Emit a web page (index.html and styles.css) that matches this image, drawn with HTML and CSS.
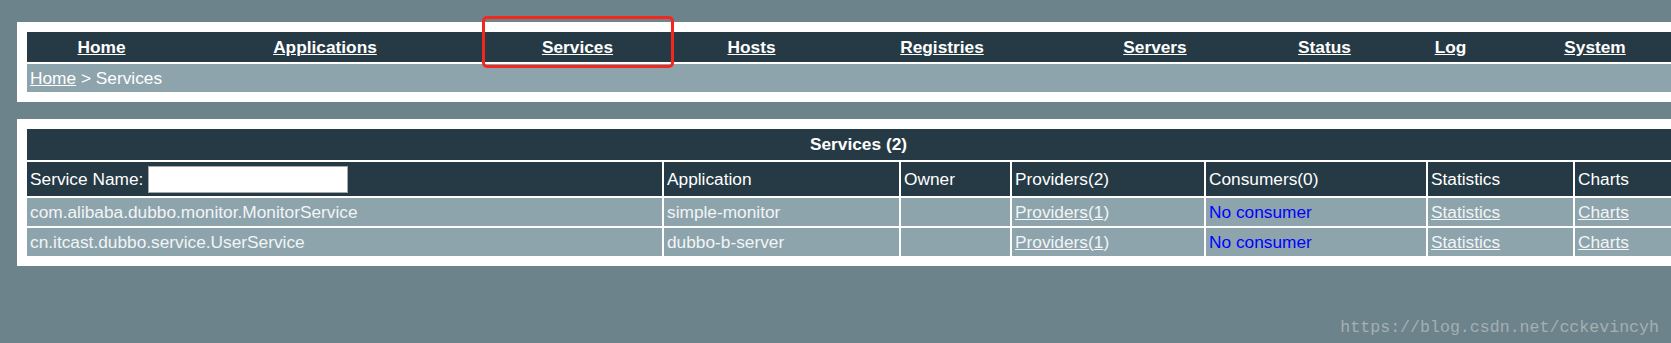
FILE: index.html
```html
<!DOCTYPE html>
<html>
<head>
<meta charset="utf-8">
<title>Services</title>
<link rel="stylesheet" href="styles.css">
</head>
<body>
<div class="page">
  <div class="box top-box">
    <nav class="nav">
      <a class="nav-item" href="#">Home</a>
      <a class="nav-item" href="#">Applications</a>
      <a class="nav-item" href="#">Services</a>
      <a class="nav-item" href="#">Hosts</a>
      <a class="nav-item" href="#">Registries</a>
      <a class="nav-item" href="#">Servers</a>
      <a class="nav-item" href="#">Status</a>
      <a class="nav-item" href="#">Log</a>
      <a class="nav-item" href="#">System</a>
    </nav>
    <div class="crumb"><a href="#">Home</a> &gt; Services</div>
    <div class="highlight"></div>
  </div>

  <div class="box table-box">
    <div class="grid">
      <div class="caption">Services (2)</div>

      <div class="cell head">Service Name:&nbsp;<span class="search"></span></div>
      <div class="cell head">Application</div>
      <div class="cell head">Owner</div>
      <div class="cell head">Providers(2)</div>
      <div class="cell head">Consumers(0)</div>
      <div class="cell head">Statistics</div>
      <div class="cell head">Charts</div>

      <div class="cell row">com.alibaba.dubbo.monitor.MonitorService</div>
      <div class="cell row">simple-monitor</div>
      <div class="cell row"></div>
      <div class="cell row"><a href="#">Providers(</a><a href="#">1</a>)</div>
      <div class="cell row"><span class="none">No consumer</span></div>
      <div class="cell row"><a href="#">Statistics</a></div>
      <div class="cell row"><a href="#">Charts</a></div>

      <div class="cell row">cn.itcast.dubbo.service.UserService</div>
      <div class="cell row">dubbo-b-server</div>
      <div class="cell row"></div>
      <div class="cell row"><a href="#">Providers(</a><a href="#">1</a>)</div>
      <div class="cell row"><span class="none">No consumer</span></div>
      <div class="cell row"><a href="#">Statistics</a></div>
      <div class="cell row"><a href="#">Charts</a></div>
    </div>
  </div>
</div>
<div class="watermark">https://blog.csdn.net/cckevincyh</div>
</body>
</html>
```

FILE: styles.css
```css
html {
  overflow: hidden;
}
body {
  margin: 0;
  background: #6d838b;
  font-family: "Liberation Sans", Arial, sans-serif;
  font-size: 17.3px;
  color: #ffffff;
  width: 1671px;
  height: 343px;
  overflow: hidden;
  position: relative;
}
.page {
  padding: 22px 0 0 17px;
  width: 1683px;
  display: flex;
  flex-direction: column;
  gap: 17px;
}
.box {
  background: #ffffff;
  padding: 10px;
  box-sizing: border-box;
  width: 1683px;
}
.top-box {
  position: relative;
  display: flex;
  flex-direction: column;
  gap: 2px;
}
.nav {
  display: grid;
  grid-template-columns: 149px 298px 207px 141px 240px 186px 153px 99px 1fr;
  height: 30px;
  background: #263a46;
}
.nav-item {
  display: flex;
  align-items: center;
  justify-content: center;
  color: #ffffff;
  font-weight: bold;
  text-decoration: underline;
  padding-top: 1px;
}
.crumb {
  height: 28px;
  background: #8da4ad;
  display: flex;
  align-items: center;
  padding-left: 3px;
  color: #ffffff;
  white-space: pre;
}
.crumb a {
  color: #ffffff;
  text-decoration: underline;
}
.highlight {
  position: absolute;
  left: 465px;
  top: -6px;
  width: 186px;
  height: 46px;
  border: 3px solid #f4271c;
  border-radius: 5px;
}
.grid {
  display: grid;
  grid-template-columns: 635px 235px 109px 192px 220px 145px 1fr;
  grid-template-rows: 31px 34px 28px 28px;
  gap: 2px;
}
.caption {
  grid-column: 1 / -1;
  background: #263a46;
  font-weight: bold;
  display: flex;
  align-items: center;
  justify-content: center;
}
.cell {
  display: flex;
  align-items: center;
  padding-left: 3px;
  white-space: nowrap;
}
.head {
  background: #263a46;
  color: #ffffff;
}
.row {
  background: #8da4ad;
  color: #f2f4f5;
}
.row a {
  color: #f2f4f5;
  text-decoration: underline;
}
.none {
  color: #0000ff;
}
.search {
  display: inline-block;
  width: 198px;
  height: 25px;
  background: #ffffff;
  border: 1px solid #a8a8a8;
  box-sizing: content-box;
}
.watermark {
  position: absolute;
  right: 12px;
  top: 318px;
  font-family: "Liberation Mono", "Courier New", monospace;
  font-size: 16.6px;
  color: #a3b0b4;
}
```
